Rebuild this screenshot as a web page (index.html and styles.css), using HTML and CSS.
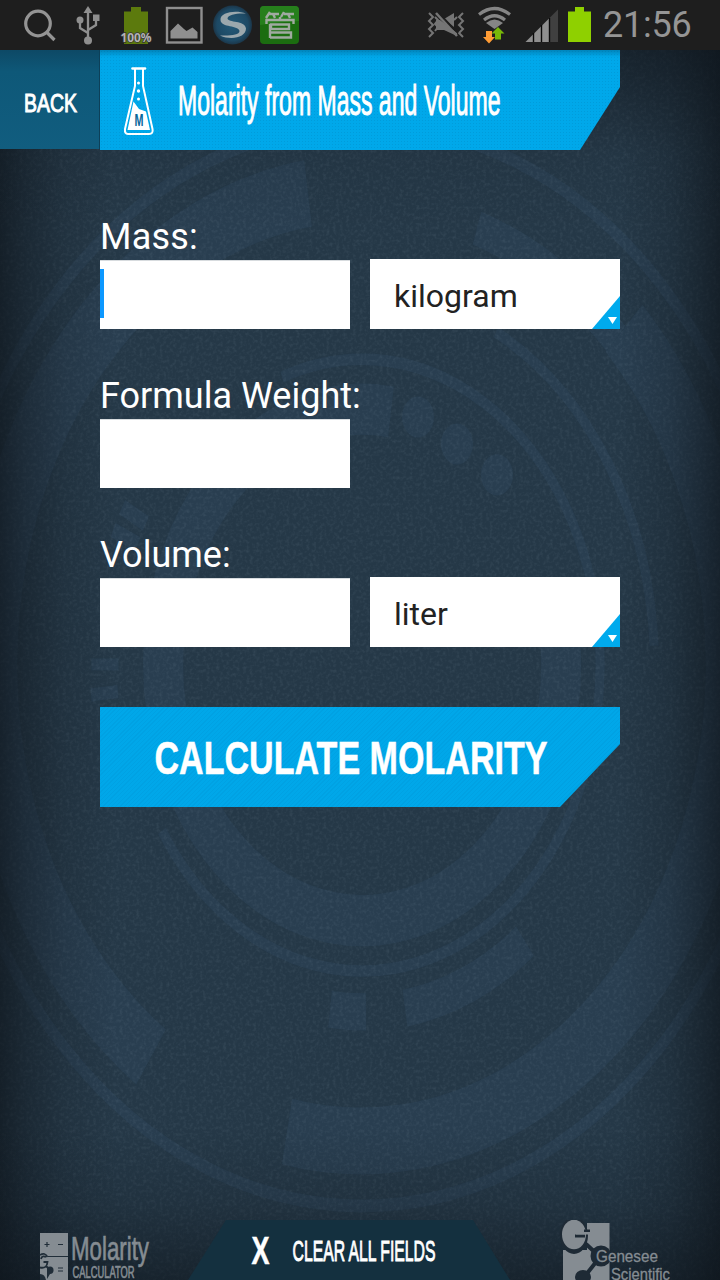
FILE: index.html
```
<!DOCTYPE html>
<html lang="en">
<head>
<meta charset="utf-8">
<title>Molarity from Mass and Volume</title>
<link rel="stylesheet" href="styles.css">
</head>
<body>
<div class="screen">
  <svg class="backdrop" viewBox="0 0 720 1280" aria-hidden="true">
    <defs>
      <filter id="grain" x="0" y="0" width="100%" height="100%">
        <feTurbulence type="fractalNoise" baseFrequency="0.3" numOctaves="2" seed="4"/>
        <feColorMatrix values="0 0 0 0 .4  0 0 0 0 .52  0 0 0 0 .62  1.2 0 0 0 -.52"/>
      </filter>
      <linearGradient id="sides">
        <stop offset="0" stop-color="#0c1218" stop-opacity=".65"/>
        <stop offset=".035" stop-color="#0c1218" stop-opacity=".42"/>
        <stop offset=".09" stop-color="#0c1218" stop-opacity=".16"/>
        <stop offset=".16" stop-color="#0c1218" stop-opacity="0"/>
        <stop offset=".86" stop-color="#0c1218" stop-opacity="0"/>
        <stop offset=".93" stop-color="#0c1218" stop-opacity=".2"/>
        <stop offset=".97" stop-color="#0c1218" stop-opacity=".44"/>
        <stop offset="1" stop-color="#0c1218" stop-opacity=".65"/>
      </linearGradient>
      <linearGradient id="ends" x2="0" y2="1">
        <stop offset=".03" stop-color="#0c1218" stop-opacity=".6"/>
        <stop offset=".12" stop-color="#0c1218" stop-opacity=".07"/>
        <stop offset=".18" stop-color="#0c1218" stop-opacity="0"/>
        <stop offset=".88" stop-color="#0c1218" stop-opacity="0"/>
        <stop offset=".94" stop-color="#0c1218" stop-opacity=".17"/>
        <stop offset="1" stop-color="#0c1218" stop-opacity=".55"/>
      </linearGradient>
    </defs>
    <rect width="720" height="1280" fill="#253847"/>
    <g transform="translate(362 665) scale(1 1.285)" fill="none" stroke="#293e50">
      <path stroke-width="40" d="M29-197A199 199 0 1 0 194-45"/>
      <path stroke-width="9" d="M-80-224A238 238 0 1 1-200 129"/>
      <path stroke-width="9" d="M134-259A292 292 0 0 1 292-15"/>
      <path stroke-width="29" d="M-32 268A270 270 0 0 0 4 270M43 267A270 270 0 0 0 163 215"/>
      <path stroke-width="27" d="M-257 4V-5M-257 27L-258 17M-231-111L-225-122M-239-94L-234-105"/>
      <path stroke-width="52" d="M-54-367A371 371 0 0 0-211 305M-75 363A371 371 0 0 0 262-262"/>
      <path stroke-width="27" d="M115-340A359 359 0 0 1 254-254"/>
      <circle r="421" stroke-width="10"/>
      <g fill="#293e50" stroke="none">
        <circle cx="56" cy="-193" r="16"/><circle cx="95" cy="-172" r="16"/><circle cx="135" cy="-148" r="16"/>
      </g>
    </g>
    <rect width="720" height="1280" filter="url(#grain)" opacity=".18"/>
    <rect width="720" height="1280" fill="url(#sides)"/>
    <rect width="720" height="1280" fill="url(#ends)"/>
  </svg>

  <div class="status">
    <svg class="status-left" width="310" height="50" viewBox="0 0 310 50">
      <g fill="none" stroke="#949494" stroke-width="3.2"><circle cx="38" cy="23.500" r="12.300"/><path d="M46.500 32L54.500 40"/></g>
      <g stroke="#8f8f8f" fill="none" stroke-width="2.300">
        <path d="M88 10V40M88 33L80 28V21M88 30L96 25V18"/>
        <g fill="#8f8f8f" stroke="none"><path d="M88 6L92.500 13H83.500Z"/><circle cx="88" cy="40.500" r="4"/><circle cx="80" cy="20" r="3.500"/><path d="M93 14.500h6.500v6.500H93Z"/></g>
      </g>
      <path fill="#5c7a0d" d="M131 7h10v4.500h7V44h-24V11.500h7Z"/>
      <text class="percent" x="120.500" y="42" textLength="31" lengthAdjust="spacingAndGlyphs">100%</text>
      <rect x="167" y="8" width="34.500" height="34.500" fill="none" stroke="#8f8f8f" stroke-width="2.400"/>
      <path fill="#8f8f8f" d="M170.500 38.500V31L178 23.500L184 29L186.500 31L192.500 27.500L197.500 32V38.500Z"/>
      <radialGradient id="orb"><stop stop-color="#245a78"/><stop offset=".8" stop-color="#1d4964"/><stop offset="1" stop-color="#1b3649"/></radialGradient>
      <circle cx="232.500" cy="25" r="19.500" fill="url(#orb)"/>
      <path fill="#9ba8ad" d="M246 13.500C236 10 220 12 220.500 20C221 28 239 25 239.500 31C239.500 35 230 36 220 35.500C232 41 246 37 246 28.500C245 20 228 23 227.500 18.500C228 14.500 237 13 246 13.500Z"/>
      <rect x="260" y="6" width="39" height="38" rx="4" fill="#1b6d10"/><path fill="#267f1c" d="M260 25V10a4 4 0 0 1 4-4h31a4 4 0 0 1 4 4v11Q278 22 260 25Z"/>
      <path fill="none" stroke="#a0aaa0" stroke-width="2.400" d="M270 12L266 18M269 14H279M273 14L275 18M284 12L281 17M284 14H294M288 14L290 18M266.500 24V20H293.500V24M280 17V20M271 24.500H289V29H271ZM270 24V38M270 32.500H291V37.500H270"/>
    </svg>
    <svg class="status-right" width="175" height="50" viewBox="425 0 175 50">
      <g fill="none" stroke="#757575" stroke-width="2"><path d="M429 13l4 4-4 4 4 4-4 4 4 4-4 4M435 17l3 3-3 4 3 3-3 4M463 13l-4 4 4 4-4 4 4 4-4 4 4 4M457 17l-3 3"/></g>
      <path fill="#757575" d="M436 20h4l17 13v3L444 30H436ZM444 19l10-6v14Z"/><path stroke="#1e1e1e" stroke-width="1.500" d="M439 13L458 33"/><path stroke="#757575" stroke-width="2.500" d="M436 13L457 36"/>
      <g fill="none" stroke="#858585" stroke-width="3.200"><path d="M479 14.500Q494.500 2.500 510 14.500M484 20Q494.500 11.500 505 20"/></g><path fill="#858585" d="M486 23Q494.500 16 503 23L494.500 29Z"/>
      <path fill="#ff9c35" d="M486 31h6v6h3l-6 6.500L483 37h3Z"/><path fill="#78b808" d="M495 39.500v-6h-3.500l6.500-6.500 6.500 6.500H501v6Z"/>
      <path fill="#8f8f8f" d="M525.500 42L549 18.500V42Z"/><path fill="#404040" d="M549 18.500L558 9.500V42H549Z"/><path fill="none" stroke="#0a0a0a" stroke-width="1.400" d="M533.500 33V42M541.500 25V42M549.500 18V42"/>
      <path fill="#8fd000" d="M575 7h9v4.500h7V42H568V11.500h7Z"/>
    </svg>
    <span class="clock">21:56</span>
  </div>

  <header class="header">
    <button class="back"><svg width="100" height="99" viewBox="0 0 100 99"><text class="cond medium" font-size="25" x="24" y="62" textLength="53" lengthAdjust="spacingAndGlyphs">BACK</text></svg></button>
    <div class="title">
      <svg width="520" height="100" viewBox="100 50 520 100">
        <g fill="none" stroke="#fff" stroke-width="2"><path stroke-width="2.600" d="M132.500 68.500H145" stroke-linecap="round"/><path d="M135 69V86L125 129Q124.500 134 128 134H149Q153.500 134 152.500 129L143 86V69"/></g>
        <path fill="#fff" d="M133.500 101.500L139 109L146 111.500L150 130H127.500Z"/>
        <g fill="#fff"><circle cx="138.500" cy="83" r="1.500"/><circle cx="138.500" cy="91" r="1.700"/><circle cx="138.500" cy="99" r="1.500"/></g>
        <text x="134.500" y="126" class="flask-letter" textLength="9" lengthAdjust="spacingAndGlyphs">M</text>
        <text class="cond medium" font-size="42" x="178" y="115" textLength="322.500" lengthAdjust="spacingAndGlyphs">Molarity from Mass and Volume</text>
      </svg>
    </div>
  </header>

  <main class="form">
    <section class="group">
      <label class="label mass" for="mass">Mass:</label>
      <div class="row"><div class="field focused"><input id="mass"></div><div class="select"><span class="kilogram">kilogram</span><i class="corner"></i></div></div>
    </section>
    <section class="group">
      <label class="label weight" for="weight">Formula Weight:</label>
      <div class="row"><div class="field"><input id="weight"></div></div>
    </section>
    <section class="group">
      <label class="label volume" for="volume">Volume:</label>
      <div class="row"><div class="field"><input id="volume"></div><div class="select"><span class="liter">liter</span><i class="corner"></i></div></div>
    </section>
    <button class="calculate"><svg width="520" height="100" viewBox="100 707 520 100"><text class="cond heavy" font-size="47" x="154.500" y="774" textLength="393" lengthAdjust="spacingAndGlyphs">CALCULATE MOLARITY</text></svg></button>
  </main>

  <footer class="footer">
    <svg class="brand" width="188" height="60" viewBox="0 1220 188 60">
      <path fill="#858c92" d="M40 1233H68V1280H40Z"/>
      <g fill="none" stroke="#202d38" stroke-width="1.200"><path d="M48 1256.500H68M44.500 1244.500h5M47 1242v5M58 1244.500h5M58 1268h5M58 1271h5"/></g>
      <path fill="none" stroke="#202d38" stroke-width="1.800" d="M40 1255Q45 1252 47.500 1257M40 1267.500Q47 1269 47.500 1262H43.500M46 1257Q42 1255 41 1259M46 1266L51 1271"/>
      <path fill="#202d38" d="M47 1267Q54 1265 53.500 1271Q53 1274 50 1274L47 1279V1271Z"/><path fill="#202d38" d="M40 1274q5 0 6 6H40Z"/>
      <text class="brand-name" x="71" y="1260" font-size="33" textLength="78" lengthAdjust="spacingAndGlyphs">Molarity</text>
      <text class="brand-name" x="72.500" y="1278" font-size="16.500" textLength="62" lengthAdjust="spacingAndGlyphs">CALCULATOR</text>
    </svg>
    <button class="clear"><svg width="322" height="60" viewBox="188 1220 322 60"><text class="cond heavy" font-size="38" x="251.500" y="1264" textLength="18" lengthAdjust="spacingAndGlyphs">X</text><text class="cond medium" font-size="30" x="292.500" y="1261" textLength="143" lengthAdjust="spacingAndGlyphs">CLEAR ALL FIELDS</text></svg></button>
    <svg class="brand" width="210" height="60" viewBox="510 1220 210 60">
      <path fill="#858c92" d="M587 1223H609.500V1280H563V1250H587Z"/>
      <ellipse cx="574" cy="1235.500" rx="14" ry="18.500" fill="#1e2a35"/>
      <path fill="none" stroke="#1e2a35" stroke-width="4" d="M586 1244L600 1257L585 1276"/>
      <ellipse cx="574" cy="1234.500" rx="12" ry="14.800" fill="#858c92"/>
      <path fill="#1e2a35" d="M584 1229.500H590V1232H584ZM575 1234.500H585V1237.500H575Z"/><path fill="#858c92" d="M576 1232H590V1234.500H576Z"/>
      <circle cx="601" cy="1256" r="10.500" fill="#1e2a35"/><ellipse cx="583" cy="1277" rx="8" ry="7" fill="#1e2a35"/>
      <text class="genesee" x="596" y="1262" font-size="17" textLength="62" lengthAdjust="spacingAndGlyphs">Genesee</text>
      <text class="genesee" x="611" y="1279.500" font-size="17" textLength="59" lengthAdjust="spacingAndGlyphs">Scientific</text>
    </svg>
  </footer>
</div>
</body>
</html>
```
FILE: styles.css
```
* { box-sizing: border-box; }
body { margin: 0; background: #263949; font-family: Roboto, "Liberation Sans", sans-serif; }
button { border: 0; padding: 0; margin: 0; }
svg { display: block; }
.screen { position: relative; width: 720px; height: 1280px; overflow: hidden; display: flex; flex-direction: column; }
.backdrop { position: absolute; inset: 0; width: 720px; height: 1280px; z-index: -1; }
.status { height: 50px; background: #1e1e1e; display: flex; flex: none; }
.status-right { margin-left: 115px; }
.clock { margin-left: 3px; font-size: 36px; line-height: 50px; color: #959595; white-space: nowrap; letter-spacing: -.2px; }
.percent { font: bold 12px "Noto Sans", sans-serif; fill: #b4b4b4; stroke: #333; stroke-width: 1.5px; paint-order: stroke; }
.header { height: 100px; display: flex; flex: none; }
.back { width: 100px; height: 99px; border-right: 1px solid #0d4059; background: linear-gradient(#0d4966, #0e5878 22%, #115d7f); background-clip: padding-box; }
.title {
  width: 520px; height: 100px;
  clip-path: polygon(0 0, 100% 0, 100% 37%, 480px 100%, 0 100%);
  background:
    linear-gradient(rgba(0, 50, 80, .3), transparent 7px),
    radial-gradient(circle, rgba(0, 85, 130, .14) .6px, transparent 1px) 0 0 / 3px 3px,
    #00a8ea;
}
.cond { font-family: "Liberation Sans", sans-serif; font-weight: bold; fill: #fff; }
.medium { font-weight: normal; stroke: #fff; stroke-width: 1px; }
.heavy { stroke: #fff; stroke-width: .5px; }
.flask-letter { font: bold 17px "Liberation Sans", sans-serif; fill: #07679a; }
.form { padding: 59px 100px 0; flex: none; }
.group { height: 159px; }
.label { display: block; height: 50px; line-height: 56px; font-size: 36px; color: #fff; white-space: nowrap; }
.mass { letter-spacing: .2px; }
.row { display: flex; gap: 20px; }
.field { width: 250px; height: 70px; padding-top: 1px; }
.field input { display: block; width: 250px; height: 69px; border: 0; border-radius: 0; padding: 0; background: #fff; border-top: 1px solid #d7dbde; }
.focused input { background: linear-gradient(#0d98ff, #0d98ff) 0 8px / 4px 49px no-repeat #fff; }
.select { position: relative; width: 250px; height: 70px; padding-left: 24px; background: #fff; color: #222; font-size: 32px; line-height: 74px; }
.corner { position: absolute; right: 0; bottom: 0; width: 28px; height: 33px; background: #00aaed; clip-path: polygon(100% 0, 100% 100%, 0 100%); }
.corner::after { content: ""; position: absolute; left: 16px; top: 21px; width: 9px; height: 7px; background: #fff; clip-path: polygon(0 0, 100% 0, 50% 100%); }
.calculate {
  display: block; width: 520px; height: 100px; margin-top: 21px;
  clip-path: polygon(0 0, 100% 0, 100% 37%, 460px 100%, 0 100%);
  background: repeating-linear-gradient(135deg, rgba(0, 90, 150, .07) 0 1px, transparent 1px 3px), #00a7e9;
}
.footer { margin-top: auto; height: 60px; display: flex; flex: none; }
.clear { width: 322px; height: 60px; background: #14303f; clip-path: polygon(38px 0, 285px 0, 100% 100%, 0 100%); }
.brand-name { font-family: "Liberation Sans", sans-serif; fill: #858c92; stroke: #858c92; stroke-width: .7px; }
.genesee { font-family: "Liberation Sans", sans-serif; fill: #858c92; stroke: #858c92; stroke-width: .3px; }
```
